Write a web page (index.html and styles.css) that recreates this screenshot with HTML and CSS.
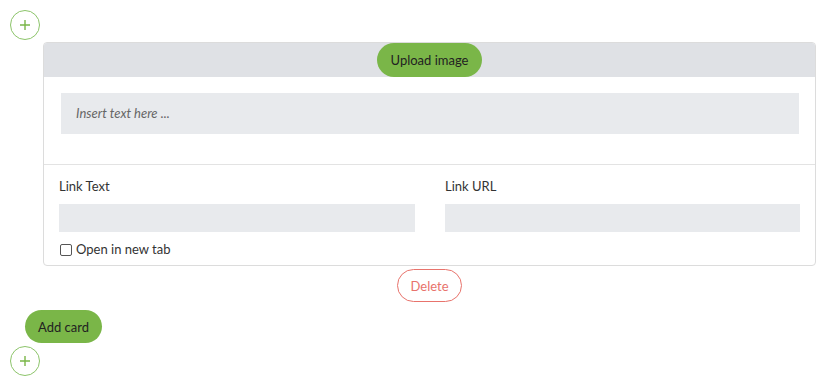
FILE: index.html
```html
<!DOCTYPE html>
<html lang="en">
<head>
  <meta charset="UTF-8">
  <title>Card editor</title>
  <link rel="stylesheet" href="styles.css">
</head>
<body>
  <div class="page">
    <button class="circle-add" aria-label="Add">
      <svg width="12" height="12" viewBox="0 0 12 12"><path d="M6 1v10M1 6h10" stroke="#7ab648" stroke-width="1.4" fill="none"/></svg>
    </button>

    <div class="card">
      <div class="card-header">
        <button class="btn-green">Upload image</button>
      </div>

      <div class="card-body">
        <div class="text-area">Insert text here ...</div>
      </div>

      <div class="card-footer">
        <div class="field">
          <label>Link Text</label>
          <div class="input"></div>
          <label class="check"><span class="box"></span>Open in new tab</label>
        </div>
        <div class="field">
          <label>Link URL</label>
          <div class="input"></div>
        </div>
      </div>
    </div>

    <div class="delete-row">
      <button class="btn-delete">Delete</button>
    </div>

    <button class="btn-green add-card">Add card</button>
    <button class="circle-add" aria-label="Add">
      <svg width="12" height="12" viewBox="0 0 12 12"><path d="M6 1v10M1 6h10" stroke="#7ab648" stroke-width="1.4" fill="none"/></svg>
    </button>
  </div>
</body>
</html>
```

FILE: styles.css
```css
* {
  margin: 0;
  padding: 0;
  box-sizing: border-box;
}

body {
  font-family: Lato, "Open Sans", sans-serif;
  font-size: 13px;
  color: #333;
  background: #fff;
}

.page {
  padding: 10px 0 0 10px;
  width: 817px;
  display: flex;
  flex-direction: column;
  align-items: flex-start;
}

button {
  font-family: inherit;
  font-size: 13px;
  cursor: pointer;
}

.circle-add {
  width: 30px;
  height: 30px;
  border-radius: 50%;
  border: 1px solid #8cc46a;
  background: #fff;
  display: flex;
  align-items: center;
  justify-content: center;
}

.card {
  margin-top: 2px;
  margin-left: 33px;
  width: 773px;
  border: 1px solid #dcdcdc;
  border-radius: 4px;
  overflow: hidden;
}

.card-header {
  height: 34px;
  background: #dfe1e5;
  display: flex;
  justify-content: center;
}

.btn-green {
  background: #7ab648;
  border: none;
  border-radius: 17px;
  height: 34px;
  padding: 0 14px;
  color: #222;
}

.card-body {
  padding: 16px 16px 30px 17px;
  border-bottom: 1px solid #e3e3e3;
}

.text-area {
  height: 41px;
  background: #e8eaed;
  padding-left: 15px;
  line-height: 41px;
  font-style: italic;
  color: #666;
}

.card-footer {
  display: grid;
  grid-template-columns: 356px 355px;
  column-gap: 30px;
  padding: 14px 15px 8px 15px;
}

.field label {
  display: block;
  height: 25px;
  line-height: 15px;
}

.input {
  height: 28px;
  background: #e8eaed;
}

.field .check {
  display: flex;
  align-items: center;
  gap: 4px;
  height: auto;
  margin-top: 10px;
  padding-left: 1px;
}

.box {
  width: 12px;
  height: 12px;
  border: 1px solid #555;
  border-radius: 2px;
  background: #fff;
}

.delete-row {
  margin-left: 33px;
  width: 773px;
  display: flex;
  justify-content: center;
  margin-top: 3px;
}

.btn-delete {
  height: 33px;
  padding: 0 12px;
  border: 1px solid #e8736c;
  border-radius: 17px;
  background: #fff;
  color: #e8736c;
}

.add-card {
  margin-top: 8px;
  margin-left: 15px;
  height: 33px;
  padding: 0 13px;
}

.add-card + .circle-add {
  margin-top: 3px;
}
```
